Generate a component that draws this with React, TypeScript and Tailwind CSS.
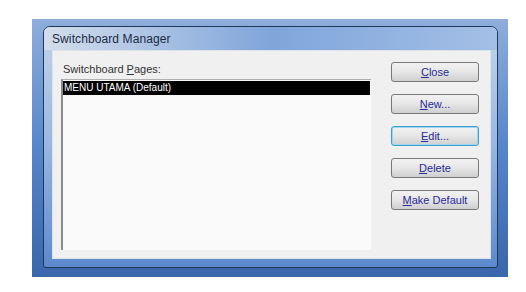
import React from 'react';

const buttons = [
  { key: 'close', u: 'C', post: 'lose' },
  { key: 'new', u: 'N', post: 'ew...' },
  { key: 'edit', u: 'E', post: 'dit...', focus: true },
  { key: 'delete', u: 'D', post: 'elete' },
  { key: 'default', u: 'M', post: 'ake Default' },
];

const App: React.FC = () => {
  return (
    <div className="w-[526px] h-[292px] bg-white overflow-hidden pt-[19px] pl-[32px]" style={{ fontFamily: '"Liberation Sans", Arial, sans-serif' }}>
      {/* blue outer frame */}
      <div className="w-[476px] h-[258px] pt-[7px] pl-[11px] pr-[10px] pb-[9px] bg-gradient-to-b from-[#8eaedb] via-[#5585ca] to-[#3a66ab]">
        {/* window */}
        <div className="h-full flex flex-col border border-[#22385a] rounded-t-[7px] rounded-b-[3px] overflow-hidden bg-gradient-to-b from-[#c3d4ea] via-[#97b6e1] to-[#5b8acd]">
          {/* title bar */}
          <div className="h-[23px] flex items-center pl-[8px] bg-gradient-to-r from-[#d4deeb] via-[#7fa5da] to-[#a3bfe6]">
            <span className="text-[12px] text-[#1c2c44] tracking-[0.1px]">Switchboard Manager</span>
          </div>
          {/* client area */}
          <div className="flex-1 ml-[8px] mr-[6px] mb-[8px] bg-[#f0f0f0] border border-[#dde3ea] flex">
            <div className="pl-[8px] pt-[11px] flex flex-col">
              <div className="h-[16px] text-[11px] text-[#333] leading-[14px] pl-[2px]">
                Switchboard <span className="underline">P</span>ages:
              </div>
              <div className="mt-[1px] w-[310px] h-[171px] bg-[#fafafa] border-l-2 border-t border-l-[#8a8a8a] border-t-[#b0b0b0] pt-[1px]">
                <div className="h-[14px] bg-black text-white text-[10px] leading-[14px] pl-[1px] w-[307px]">
                  MENU UTAMA (Default)
                </div>
              </div>
            </div>
            <div className="ml-[20px] pt-[11px] flex flex-col gap-[12px]">
              {buttons.map((b) => (
                <div
                  key={b.key}
                  className={
                    'w-[88px] h-[20px] rounded-[3px] border flex items-center justify-center text-[11px] text-[#2a2a96] bg-gradient-to-b from-[#f2f2f2] via-[#e6e6e6] to-[#cfcfcf] ' +
                    (b.focus ? 'border-[#3d9ed0] shadow-[inset_0_0_0_1px_#9fd6f0]' : 'border-[#7a7a7a]')
                  }
                >
                  <span>
                    <span className="underline">{b.u}</span>
                    {b.post}
                  </span>
                </div>
              ))}
            </div>
          </div>
        </div>
      </div>
    </div>
  );
};

export default App;
